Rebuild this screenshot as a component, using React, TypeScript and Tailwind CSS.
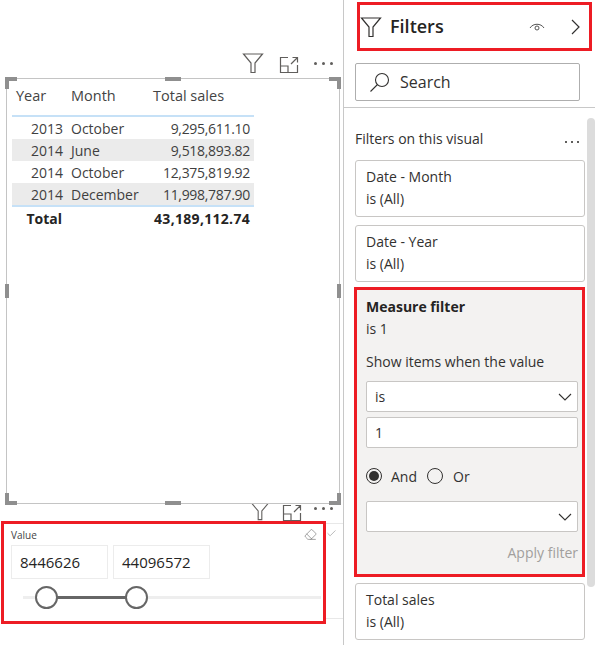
import { Eraser, Check } from "lucide-react";

const rows = [
  { year: "2013", month: "October", sales: "9,295,611.10" },
  { year: "2014", month: "June", sales: "9,518,893.82", shaded: true },
  { year: "2014", month: "October", sales: "12,375,819.92" },
  { year: "2014", month: "December", sales: "11,998,787.90", shaded: true },
];

function FunnelIcon({ size = 22, color = "#605e5c" }: { size?: number; color?: string }) {
  return (
    <svg width={size} height={size} viewBox="0 0 22 22" fill="none" stroke={color} strokeWidth="1.2">
      <path d="M1.5 2h19l-7.5 9v9.5h-4V11z" />
    </svg>
  );
}

function FocusIcon() {
  return (
    <svg width="20" height="18" viewBox="0 0 20 18" fill="none" stroke="#605e5c" strokeWidth="1.2">
      <path d="M9 1.5H1.5v15h17V9" />
      <path d="M1.5 10H9v6.5" />
      <path d="M12 8l6.5-6.5M13.5 1.5h5v5" />
    </svg>
  );
}

function Dots() {
  return (
    <div className="flex gap-[5px]">
      <span className="h-[3px] w-[3px] rounded-full bg-[#605e5c]" />
      <span className="h-[3px] w-[3px] rounded-full bg-[#605e5c]" />
      <span className="h-[3px] w-[3px] rounded-full bg-[#605e5c]" />
    </div>
  );
}

function SmallDots() {
  return (
    <div className="flex gap-[4px]">
      <span className="h-[2px] w-[2px] bg-[#605e5c]" />
      <span className="h-[2px] w-[2px] bg-[#605e5c]" />
      <span className="h-[2px] w-[2px] bg-[#605e5c]" />
    </div>
  );
}

function SelectChevron() {
  return (
    <svg width="14" height="8" viewBox="0 0 14 8" fill="none" stroke="#323130" strokeWidth="1.1">
      <path d="M1 1l6 6 6-6" />
    </svg>
  );
}

function FilterCard({ title, sub }: { title: string; sub: string }) {
  return (
    <div className="h-[57px] w-[230px] rounded-[3px] border border-[#c8c6c4] bg-white pl-[10px] pt-[5px] text-[14px] leading-[22px] text-[#323130]">
      <div>{title}</div>
      <div>{sub}</div>
    </div>
  );
}

function Handle({ className }: { className: string }) {
  return <div className={"absolute bg-[#8f8f8f] " + className} />;
}

function DataTable() {
  return (
    <div className="w-[242px] text-[14px] text-[#3f3f3f]">
      <div className="grid h-[36px] grid-cols-[54px_82px_106px] items-center pb-[2px] text-[14.5px] text-[#444]">
        <div className="pl-[4px]">Year</div>
        <div className="pl-[5px]">Month</div>
        <div className="pl-[5px]">Total sales</div>
      </div>
      <div className="h-[2px] bg-[#c6e1f7]" />
      {rows.map((row, i) => (
        <div
          key={i}
          className={
            "grid h-[22px] grid-cols-[54px_82px_106px] items-center " +
            (row.shaded ? "bg-[#ebebeb]" : "bg-white")
          }
        >
          <div className="pr-[3px] text-right">{row.year}</div>
          <div className="pl-[5px]">{row.month}</div>
          <div className="pr-[4px] text-right tracking-[-0.3px]">{row.sales}</div>
        </div>
      ))}
      <div className="h-[2px] bg-[#c6e1f7]" />
      <div className="grid h-[22px] grid-cols-[54px_82px_106px] items-center font-bold text-[#252423]">
        <div className="pr-[4px] text-right">Total</div>
        <div />
        <div className="pr-[4px] text-right tracking-[0.3px]">43,189,112.74</div>
      </div>
    </div>
  );
}

function Slicer() {
  return (
    <div className="relative ml-[1px] h-[103px] w-[325px] border-[3px] border-[#ed1c24] bg-white pl-[7px] pt-[5px]">
      <div className="text-[10px] leading-[12px] text-[#444]">Value</div>
      <Eraser size={13} strokeWidth={1} color="#555" className="absolute right-[6px] top-[4px]" />
      <div className="mt-[4px] flex gap-[5px]">
        <div className="flex h-[34px] w-[97px] items-center border border-[#ececec] pl-[8px] text-[15px] text-[#252423]">
          8446626
        </div>
        <div className="flex h-[34px] w-[97px] items-center border border-[#ececec] pl-[8px] text-[15px] text-[#252423]">
          44096572
        </div>
      </div>
      <div className="relative mt-[7px] ml-[12px] h-[23px] w-[298px]">
        <div className="absolute left-0 right-0 top-[10px] h-[3px] bg-[#eeeeee]" />
        <div className="absolute left-[23px] top-[10px] h-[3px] w-[90px] bg-[#666666]" />
        <div className="absolute left-[12px] top-0 h-[23px] w-[23px] rounded-full border-2 border-[#666666] bg-white" />
        <div className="absolute left-[102px] top-0 h-[23px] w-[23px] rounded-full border-2 border-[#666666] bg-white" />
      </div>
    </div>
  );
}

function Canvas() {
  return (
    <div className="relative w-[344px] shrink-0 border-r border-[#c8c8c8]">
      <div className="flex h-[78px] items-end justify-end gap-[15px] pb-[4px] pr-[10px]">
        <FunnelIcon />
        <FocusIcon />
        <div className="mb-[9px]">
          <Dots />
        </div>
      </div>
      <div className="relative ml-[6px] h-[426px] w-[334px] border border-[#c4c4c4] bg-white pl-[5px]">
        <Handle className="-left-[2px] -top-[2px] h-[4px] w-[12px]" />
        <Handle className="-left-[2px] -top-[2px] h-[12px] w-[4px]" />
        <Handle className="-right-[2px] -top-[2px] h-[4px] w-[12px]" />
        <Handle className="-right-[2px] -top-[2px] h-[12px] w-[4px]" />
        <Handle className="-bottom-[2px] -left-[2px] h-[4px] w-[12px]" />
        <Handle className="-bottom-[2px] -left-[2px] h-[12px] w-[4px]" />
        <Handle className="-bottom-[2px] -right-[2px] h-[4px] w-[12px]" />
        <Handle className="-bottom-[2px] -right-[2px] h-[12px] w-[4px]" />
        <Handle className="left-[158px] -top-[2px] h-[4px] w-[16px]" />
        <Handle className="-bottom-[2px] left-[158px] h-[4px] w-[16px]" />
        <Handle className="-left-[2px] top-[205px] h-[14px] w-[4px]" />
        <Handle className="-right-[2px] top-[205px] h-[14px] w-[4px]" />
        <DataTable />
      </div>
      <div className="flex h-[17px] justify-end gap-[12px] overflow-hidden pr-[10px]">
        <div className="-mt-[3px]">
          <FunnelIcon size={20} />
        </div>
        <FocusIcon />
        <div className="mt-[3px]">
          <Dots />
        </div>
      </div>
      <div className="flex items-start">
        <Slicer />
        <div className="mt-[2px] h-[96px] flex-1 border-y border-[#e8e8e8] pt-[4px]">
          <Check size={11} strokeWidth={1} color="#666" />
        </div>
      </div>
    </div>
  );
}

function FiltersPane() {
  return (
    <div className="relative flex-1 bg-white">
      <div className="ml-[13px] mt-[2px] flex h-[49px] w-[235px] items-center border-[3px] border-[#ed1c24] pr-[9px]">
        <FunnelIcon size={22} color="#323130" />
        <div className="ml-[8px] flex-1 text-[18px] font-semibold text-[#252423]">Filters</div>
        <svg width="16" height="10" viewBox="0 0 16 10" fill="none" stroke="#555" strokeWidth="1" className="mr-[26px]">
          <path d="M1 6C4 1 12 1 15 6" />
          <circle cx="8" cy="6" r="2" />
        </svg>
        <svg width="9" height="16" viewBox="0 0 9 16" fill="none" stroke="#323130" strokeWidth="1.2">
          <path d="M1 1l7 7-7 7" />
        </svg>
      </div>
      <div className="ml-[11px] mt-[12px] flex h-[38px] w-[225px] items-center rounded-[2px] border border-[#aeaeae] pl-[13px] text-[16px] text-[#323130]">
        <svg width="21" height="21" viewBox="0 0 21 21" fill="none" stroke="#323130" strokeWidth="1.1">
          <circle cx="13" cy="8" r="6.5" />
          <path d="M8.5 12.5L1.5 19.5" />
        </svg>
        <span className="ml-[10px]">Search</span>
      </div>
      <div className="mt-[6px] h-px bg-[#c8c8c8]" />
      <div className="pl-[11px]">
        <div className="flex h-[52px] w-[224px] items-center justify-between pt-[9px] text-[14px] text-[#323130]">
          <span>Filters on this visual</span>
          <div className="mt-[6px]">
            <SmallDots />
          </div>
        </div>
        <div className="flex flex-col gap-[8px]">
          <FilterCard title="Date - Month" sub="is (All)" />
          <FilterCard title="Date - Year" sub="is (All)" />
        </div>
        <div className="-ml-[1px] mt-[5px] h-[290px] w-[231px] border-[3px] border-[#ed1c24] bg-[#f3f2f1] pl-[9px] pr-[4px] pt-[6px] text-[14px] text-[#323130]">
          <div className="font-bold leading-[22px] text-[#252423]">Measure filter</div>
          <div className="leading-[22px]">is 1</div>
          <div className="mt-[11px] leading-[22px]">Show items when the value</div>
          <div className="mt-[8px] flex h-[31px] items-center justify-between rounded-[2px] border border-[#c8c6c4] bg-white pl-[8px] pr-[5px]">
            is
            <SelectChevron />
          </div>
          <div className="mt-[5px] flex h-[31px] items-center rounded-[2px] border border-[#c8c6c4] bg-white pl-[8px]">1</div>
          <div className="mt-[14px] flex h-[28px] items-center">
            <div className="flex h-[16px] w-[16px] items-center justify-center rounded-full border border-[#323130]">
              <div className="h-[10px] w-[10px] rounded-full bg-[#323130]" />
            </div>
            <span className="ml-[9px]">And</span>
            <div className="ml-[10px] h-[16px] w-[16px] rounded-full border border-[#323130]" />
            <span className="ml-[10px]">Or</span>
          </div>
          <div className="mt-[11px] flex h-[31px] items-center justify-end rounded-[2px] border border-[#c8c6c4] bg-white pr-[5px]">
            <SelectChevron />
          </div>
          <div className="mt-[10px] text-right leading-[22px] text-[#a19f9d]">Apply filter</div>
        </div>
        <div className="mt-[6px]">
          <FilterCard title="Total sales" sub="is (All)" />
        </div>
      </div>
      <div className="absolute right-0 top-[118px] h-[469px] w-[8px] rounded-[4px] bg-[#dcdcdc]" />
    </div>
  );
}

export default function App() {
  return (
    <div className="flex h-[645px] w-[595px] overflow-hidden bg-white font-['Open_Sans',sans-serif]">
      <Canvas />
      <FiltersPane />
    </div>
  );
}
